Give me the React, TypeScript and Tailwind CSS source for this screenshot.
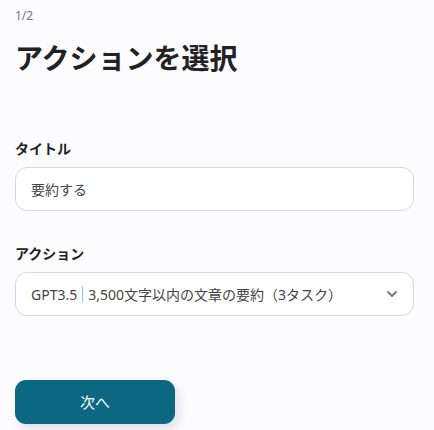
import { ChevronDown } from "lucide-react";

export default function App() {
  return (
    <div
      className="min-h-[430px] bg-[#fcfcfe] pl-[15px] pr-[20px] pt-[8px] text-[#222]"
      style={{ fontFamily: '"Noto Sans", "Noto Sans CJK JP", sans-serif' }}
    >
      <div className="text-[12px] leading-[16px] text-[#777]">1/2</div>
      <h1 className="mt-[16px] text-[28px] font-bold leading-[36px] text-[#222]">
        アクションを選択
      </h1>

      <div className="mt-[63px]">
        <label className="block text-[14px] font-bold leading-[20px]">タイトル</label>
        <div className="mt-[8px] flex h-[44px] items-center rounded-[12px] border border-[#d6d6e0] bg-white px-[15px] text-[14px] text-[#444]">
          要約する
        </div>
      </div>

      <div className="mt-[33px]">
        <label className="block text-[14px] font-bold leading-[20px]">アクション</label>
        <div className="mt-[8px] flex h-[44px] items-center justify-between rounded-[12px] border border-[#d6d6e0] bg-white pl-[15px] pr-[13px] text-[14px] text-[#444]">
          <span className="flex items-center">
            GPT3.5
            <span className="mx-[5px] h-[16px] w-px bg-[#8cc4ea]" />
            3,500文字以内の文章の要約（3タスク）
          </span>
          <ChevronDown className="h-[16px] w-[16px] text-[#777]" strokeWidth={2.75} />
        </div>
      </div>

      <button className="mt-[64px] flex h-[44px] w-[160px] items-center justify-center rounded-[11px] bg-[#0b6782] text-[15px] text-white shadow-[4px_5px_10px_rgba(20,20,60,0.12)]">
        次へ
      </button>
    </div>
  );
}
